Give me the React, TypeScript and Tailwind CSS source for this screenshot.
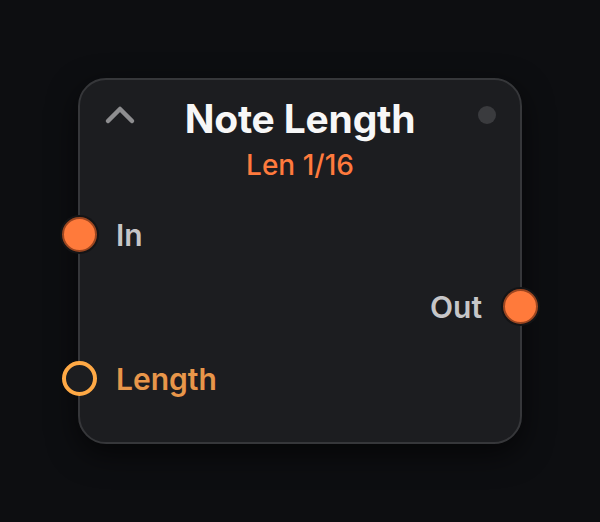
import { ChevronUp } from "lucide-react";

const font = { fontFamily: "Inter, 'Noto Sans', sans-serif" };

const Port = ({ hollow }: { hollow?: boolean }) =>
  hollow ? (
    <div className="w-[39px] h-[39px] rounded-full flex items-center justify-center shrink-0">
      <div className="w-[35px] h-[35px] rounded-full border-[4px] border-[#ffa945] bg-[#1c1d20]" />
    </div>
  ) : (
    <div className="w-[39px] h-[39px] rounded-full bg-[#141416] p-[2px] shrink-0">
      <div className="w-full h-full rounded-full bg-[#ff7a3b] border-2 border-[#9c4620]" />
    </div>
  );

export default function App() {
  return (
    <div className="w-full h-screen bg-[#0d0e11] flex items-center justify-center" style={font}>
      <div className="w-[444px] h-[366px] rounded-[28px] border-2 border-[#36373a] bg-[#1c1d20] shadow-[0_10px_30px_rgba(0,0,0,0.6)] flex flex-col">
        {/* Header */}
        <div className="grid grid-cols-[60px_1fr_60px] items-center pt-[17px] px-[24px]">
          <ChevronUp className="w-[48px] h-[48px] text-[#8e8e90] -mt-[8px] -ml-[8px]" strokeWidth={2.25} />
          <h1 className="text-center text-[39px] leading-[44px] font-bold text-[#f7f7f7] tracking-[-0.2px] whitespace-nowrap">
            Note Length
          </h1>
          <div className="flex justify-end -mt-[8px]">
            <div className="w-[18px] h-[18px] rounded-full bg-[#3a3b3e]" />
          </div>
        </div>
        <p className="text-center text-[28px] leading-[34px] font-medium text-[#ff7a3d] mt-[7px]">Len 1/16</p>

        {/* Ports */}
        <div className="flex flex-col gap-[33px] mt-[33px]">
          <div className="flex items-center gap-[17px] -ml-[20px]">
            <Port />
            <span className="text-[30px] leading-[38px] font-semibold text-[#c6c6c8]">In</span>
          </div>
          <div className="flex items-center justify-end gap-[19px] -mr-[20px]">
            <span className="text-[30px] leading-[38px] font-semibold text-[#c6c6c8]">Out</span>
            <Port />
          </div>
          <div className="flex items-center gap-[17px] -ml-[20px]">
            <Port hollow />
            <span className="text-[30px] leading-[38px] font-semibold text-[#e8964a]">Length</span>
          </div>
        </div>
      </div>
    </div>
  );
}
